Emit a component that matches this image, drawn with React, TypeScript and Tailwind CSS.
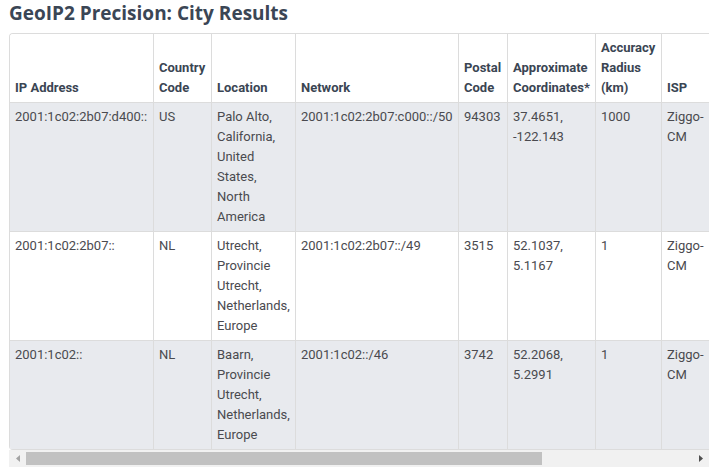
import React from 'react';

interface Row {
  ip: string;
  country: string;
  location: string[];
  network: string;
  postal: string;
  coords: string[];
  radius: string;
  isp: string[];
}

const rows: Row[] = [
  {
    ip: '2001:1c02:2b07:d400::',
    country: 'US',
    location: ['Palo Alto,', 'California,', 'United', 'States,', 'North', 'America'],
    network: '2001:1c02:2b07:c000::/50',
    postal: '94303',
    coords: ['37.4651,', '-122.143'],
    radius: '1000',
    isp: ['Ziggo-', 'CM'],
  },
  {
    ip: '2001:1c02:2b07::',
    country: 'NL',
    location: ['Utrecht,', 'Provincie', 'Utrecht,', 'Netherlands,', 'Europe'],
    network: '2001:1c02:2b07::/49',
    postal: '3515',
    coords: ['52.1037,', '5.1167'],
    radius: '1',
    isp: ['Ziggo-', 'CM'],
  },
  {
    ip: '2001:1c02::',
    country: 'NL',
    location: ['Baarn,', 'Provincie', 'Utrecht,', 'Netherlands,', 'Europe'],
    network: '2001:1c02::/46',
    postal: '3742',
    coords: ['52.2068,', '5.2991'],
    radius: '1',
    isp: ['Ziggo-', 'CM'],
  },
];

const headers: string[][] = [
  ['IP Address'],
  ['Country', 'Code'],
  ['Location'],
  ['Network'],
  ['Postal', 'Code'],
  ['Approximate', 'Coordinates*'],
  ['Accuracy', 'Radius', '(km)'],
  ['ISP'],
  [''],
];

function Lines({ lines }: { lines: string[] }) {
  return (
    <>
      {lines.map((l, i) => (
        <div key={i} className="whitespace-nowrap">
          {l}
        </div>
      ))}
    </>
  );
}

const cell = 'border-r border-b border-[#dcdcdc] px-[5px] py-[4px]';

export default function App() {
  return (
    <div className="bg-white pl-[9px] font-['Roboto',sans-serif]">
      <h2 className="mb-[7px] font-['Open_Sans',sans-serif] text-[19px] font-bold leading-[26px] text-[#3b4655]">
        GeoIP2 Precision: City Results
      </h2>

      <div className="w-[700px]">
        <div className="overflow-hidden rounded-l-[4px] border-t border-l border-[#dcdcdc]">
          <div className="grid w-[905px] grid-cols-[144px_58px_84px_163px_49px_88px_66px_52px_200px] text-[13px] leading-[20px]">
            {headers.map((h, i) => (
              <div
                key={i}
                className={`${cell} flex flex-col justify-end bg-white font-bold text-[#3a4553]`}
              >
                <Lines lines={h} />
              </div>
            ))}

            {rows.map((r, i) => {
              const bg = i % 2 === 0 ? 'bg-[#e8eaee]' : 'bg-white';
              const c = `${cell} ${bg} text-[#4a4a4f]`;
              return (
                <React.Fragment key={r.ip}>
                  <div className={c}>{r.ip}</div>
                  <div className={c}>{r.country}</div>
                  <div className={c}>
                    <Lines lines={r.location} />
                  </div>
                  <div className={c}>{r.network}</div>
                  <div className={c}>{r.postal}</div>
                  <div className={c}>
                    <Lines lines={r.coords} />
                  </div>
                  <div className={c}>{r.radius}</div>
                  <div className={c}>
                    <Lines lines={r.isp} />
                  </div>
                  <div className={c} />
                </React.Fragment>
              );
            })}
          </div>
        </div>

        {/* horizontal scrollbar */}
        <div className="flex h-[17px] items-center bg-[#f1f1f1]">
          <div className="flex h-full w-[17px] items-center justify-center">
            <svg width="4" height="7" viewBox="0 0 4 7">
              <path d="M4 0 L0 3.5 L4 7 Z" fill="#a3a3a3" />
            </svg>
          </div>
          <div className="h-[13px] w-[516px] bg-[#c1c1c1]" />
          <div className="flex-1" />
          <div className="flex h-full w-[17px] items-center justify-center">
            <svg width="4" height="7" viewBox="0 0 4 7">
              <path d="M0 0 L4 3.5 L0 7 Z" fill="#505050" />
            </svg>
          </div>
        </div>
      </div>
    </div>
  );
}
